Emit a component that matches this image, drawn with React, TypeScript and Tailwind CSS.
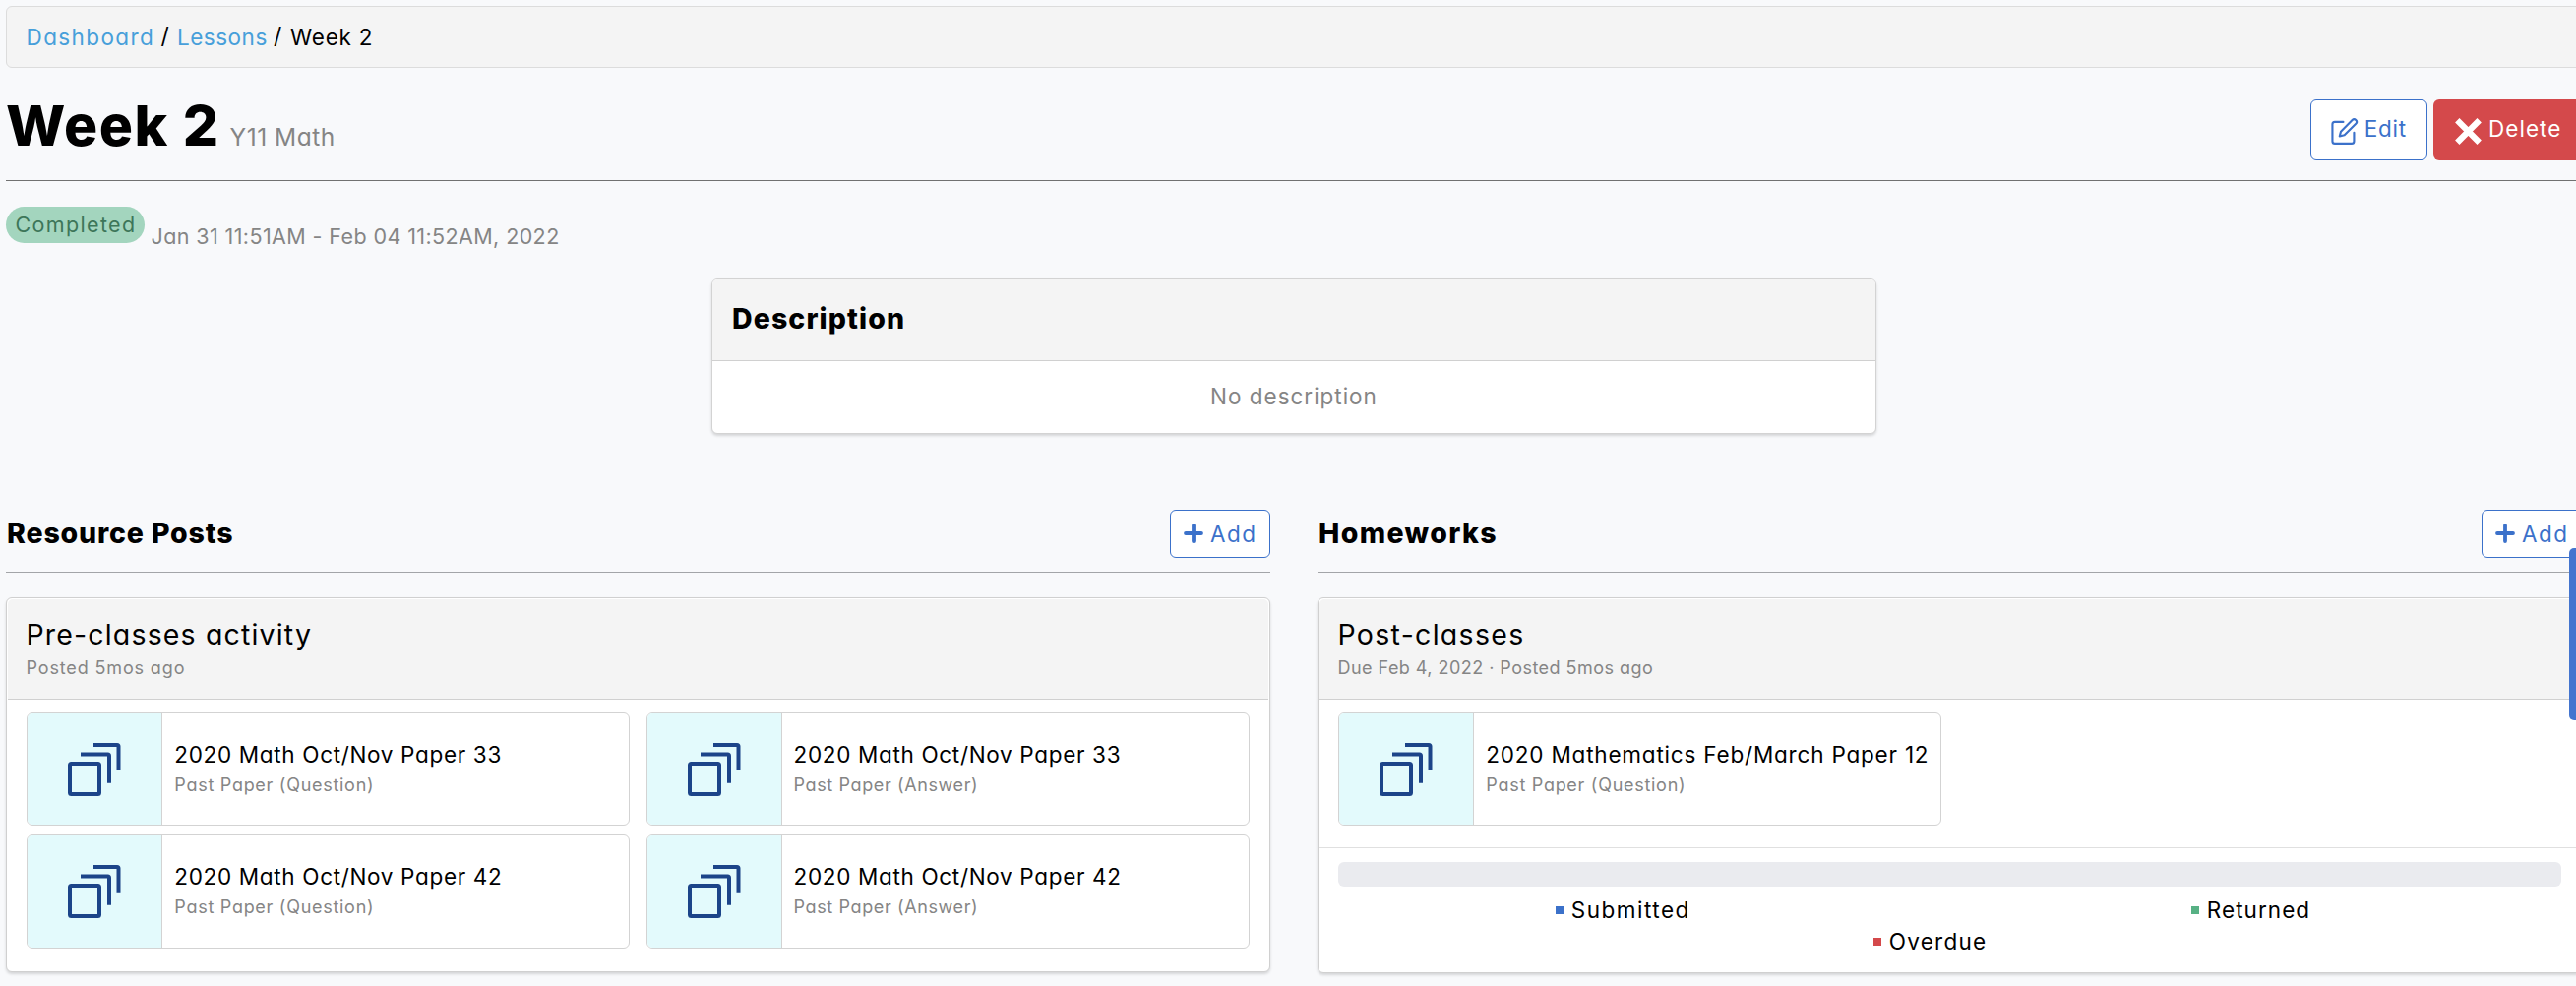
import type { ReactNode } from "react";

function StackIcon() {
  return (
    <svg width="54" height="54" viewBox="0 0 54 54" fill="none" stroke="#1c4489" strokeWidth="4">
      <rect x="2" y="21" width="30" height="31" rx="1.5" />
      <path d="M13 11.6H40.5Q42 11.6 42 13.1V40.8" />
      <path d="M26 2H50Q51.5 2 51.5 3.5V27.8" />
    </svg>
  );
}

function EditIcon() {
  return (
    <svg
      className="mt-1 shrink-0"
      width="29.3"
      height="29.3"
      viewBox="0 0 24 24"
      fill="none"
      stroke="#3b71ca"
      strokeWidth="1.75"
      strokeLinecap="round"
      strokeLinejoin="round"
    >
      <path d="M11 4H4a2 2 0 0 0-2 2v14a2 2 0 0 0 2 2h14a2 2 0 0 0 2-2v-7" />
      <path d="M18.5 2.5a2.121 2.121 0 0 1 3 3L12 15l-4 1 1-4 9.5-9.5z" />
    </svg>
  );
}

function CrossIcon() {
  return (
    <svg className="mt-1 shrink-0" width="27" height="27" viewBox="0 0 27 27" stroke="#fff" strokeWidth="6.2">
      <path d="M2.3 2.3L24.7 24.7M24.7 2.3L2.3 24.7" />
    </svg>
  );
}

function AddButton() {
  return (
    <button className="flex h-[49px] w-[102px] shrink-0 items-center gap-[7px] rounded-md border border-[#3b71ca] bg-white pl-[13px] text-[22.5px] text-[#3b71ca]">
      <svg className="-mt-px shrink-0" width="20" height="20" viewBox="0 0 20 20" stroke="#3b71ca" strokeWidth="3.8" strokeLinecap="round">
        <path d="M10 2V18M2 10H18" />
      </svg>
      <span className="tracking-[1.5px]">Add</span>
    </button>
  );
}

function SectionHeader({ children }: { children: ReactNode }) {
  return (
    <div className="flex h-16 items-start justify-between border-b border-[#a3a5a8] pl-px">
      {children}
      <AddButton />
    </div>
  );
}

function CardHeader({ children }: { children: ReactNode }) {
  return (
    <div className="h-[102px] rounded-t-[5px] border-b border-[#d0d0d0] bg-[#f4f4f4] pt-4 pl-[18.5px]">{children}</div>
  );
}

function Resource({ title, kind }: { title: ReactNode; kind: ReactNode }) {
  return (
    <div className="flex h-[115.2px] w-[613px] overflow-hidden rounded-md border border-[#d3d3d3] bg-white">
      <div className="flex w-[137px] shrink-0 items-center justify-center border-r border-[#d3d3d3] bg-[#e3fafc]">
        <StackIcon />
      </div>
      <div className="pt-[27px] pl-3 whitespace-nowrap">
        <div className="text-[22.5px] leading-[30px]">{title}</div>
        <div className="mt-[3.5px] text-[18px] leading-6 text-[#858585]">{kind}</div>
      </div>
    </div>
  );
}

const question = <span className="tracking-[0.72px]">Past Paper (Question)</span>;
const answer = <span className="tracking-[0.62px]">Past Paper (Answer)</span>;
const paper33 = <span className="tracking-[0.67px]">2020 Math Oct/Nov Paper 33</span>;
const paper42 = <span className="tracking-[0.67px]">2020 Math Oct/Nov Paper 42</span>;

export default function App() {
  return (
    <div className="relative h-[1002px] w-full overflow-hidden bg-[#f8f9fb] pt-1.5 pl-1.5 font-['Inter',sans-serif] font-normal text-black [font-feature-settings:'cv11']">
      <main className="w-[2618px]">
        <nav className="flex h-[63px] items-center rounded-md border border-[#dcdcdc] bg-[#f4f4f4] pl-[19.5px] text-[22.5px]">
          <a className="w-[137px] tracking-[1.4px] text-[#479fda]">Dashboard</a>
          <span className="w-[16.5px] text-[23px]">/</span>
          <a className="w-[98px] tracking-[0.5px] text-[#479fda]">Lessons</a>
          <span className="w-[17px] text-[23px]">/</span>
          <span className="tracking-[0.75px]">Week 2</span>
        </nav>

        <header className="flex h-[115px] items-start justify-between border-b border-[#717171]">
          <div className="mt-[28.5px] flex items-baseline gap-[9px]">
            <h1 className="text-[57px] leading-[60px] font-extrabold tracking-[1.5px]">Week 2</h1>
            <span className="pl-px text-[24.5px] tracking-[0.5px] text-[#858585]">Y11 Math</span>
          </div>
          <div className="mt-8 flex gap-1.5 text-[22.5px] leading-[30px]">
            <button className="flex h-[62px] w-[119px] items-center gap-1.5 rounded-md border border-[#3b71ca] bg-white pb-px pl-[18.5px] text-[#3b71ca]">
              <EditIcon />
              <span className="-mt-0.5 tracking-[0.75px]">Edit</span>
            </button>
            <button className="flex h-[62px] w-[151px] items-center gap-[7px] rounded-md bg-[#d4494b] pb-px pl-[22px] text-white">
              <CrossIcon />
              <span className="-mt-0.5 tracking-[1.05px]">Delete</span>
            </button>
          </div>
        </header>

        <div className="mt-[26px] flex h-[37px] items-start">
          <span className="flex h-[37px] w-[141px] items-center rounded-full bg-[#a3d5be] pl-[9.5px] text-[21.5px] tracking-[1.35px] text-[#3d7659]">
            Completed
          </span>
          <span className="mt-[15px] pl-[6.5px] text-[21.5px] leading-[30px] tracking-[0.4px] text-[#858585]">
            Jan 31 11:51AM - Feb 04 11:52AM, 2022
          </span>
        </div>

        <section className="mx-auto mt-9 flex h-[158px] w-[1184px] flex-col rounded-md border border-[#d3d3d3] bg-white shadow-[0_2px_3px_rgba(0,0,0,0.14)]">
          <h2 className="flex h-[83px] items-center rounded-t-[5px] border-b border-[#d0d0d0] bg-[#f4f4f4] pb-0.5 pl-5 text-[28.5px] font-extrabold tracking-[1.1px]">
            Description
          </h2>
          <p className="flex flex-1 items-center justify-center pb-px text-[22.5px] tracking-[0.98px] text-[#858585]">
            No description
          </p>
        </section>

        <div className="mt-[77px] grid grid-cols-[1285px_1285px] items-start gap-12">
          <section>
            <SectionHeader>
              <h2 className="text-[28.5px] leading-[48px] font-extrabold tracking-[0.85px]">Resource Posts</h2>
            </SectionHeader>
            <article className="mt-[25px] h-[381px] rounded-md border border-[#d0d0d0] bg-white p-px shadow-[0_2px_3px_rgba(0,0,0,0.14)]">
              <CardHeader>
                <h3 className="text-[28.5px] leading-10 tracking-[1.16px]">Pre-classes activity</h3>
                <p className="mt-0.5 text-[18px] leading-6 tracking-[0.86px] text-[#858585]">Posted 5mos ago</p>
              </CardHeader>
              <div className="grid grid-cols-2 gap-x-[16px] gap-y-[9.3px] px-[19.3px] pt-[13px]">
                <Resource title={paper33} kind={question} />
                <Resource title={paper33} kind={answer} />
                <Resource title={paper42} kind={question} />
                <Resource title={paper42} kind={answer} />
              </div>
            </article>
          </section>

          <section>
            <SectionHeader>
              <h2 className="text-[28.5px] leading-[48px] font-extrabold tracking-[1.35px]">Homeworks</h2>
            </SectionHeader>
            <article className="mt-[25px] h-[382px] rounded-md border border-[#d0d0d0] bg-white p-px shadow-[0_2px_3px_rgba(0,0,0,0.14)]">
              <CardHeader>
                <h3 className="text-[28.5px] leading-10 tracking-[1.3px]">Post-classes</h3>
                <p className="mt-0.5 text-[18px] leading-6 tracking-[0.46px] text-[#858585]">
                  Due Feb 4, 2022 · Posted 5mos ago
                </p>
              </CardHeader>
              <div className="h-[151px] border-b border-[#e0e0e0] px-[19.3px] pt-[13px]">
                <Resource
                  title={<span className="tracking-[0.8px]">2020 Mathematics Feb/March Paper 12</span>}
                  kind={question}
                />
              </div>
              <div className="px-[19.3px] pt-3.5">
                <div className="h-[25px] rounded-md bg-[#eaebef]" />
                <div className="mt-[7px] text-[22.5px] leading-[33px]">
                  <div className="flex h-[33px] pl-[220.5px]">
                    <div className="flex w-[646px] items-center gap-2">
                      <i className="size-2 bg-[#3b71ca]" />
                      <span className="-mt-px tracking-[1.5px]">Submitted</span>
                    </div>
                    <div className="flex items-center gap-2">
                      <i className="size-2 bg-[#57b184]" />
                      <span className="-mt-px tracking-[1.05px]">Returned</span>
                    </div>
                  </div>
                  <div className="flex items-center gap-2 pl-[543.5px]">
                    <i className="size-2 bg-[#d4494b]" />
                    <span className="-mt-px tracking-[1.25px]">Overdue</span>
                  </div>
                </div>
              </div>
            </article>
          </section>
        </div>
      </main>
      <div className="absolute top-[557px] right-0 h-[175px] w-[7px] rounded-l-[5px] bg-[#4375cf]" />
    </div>
  );
}
